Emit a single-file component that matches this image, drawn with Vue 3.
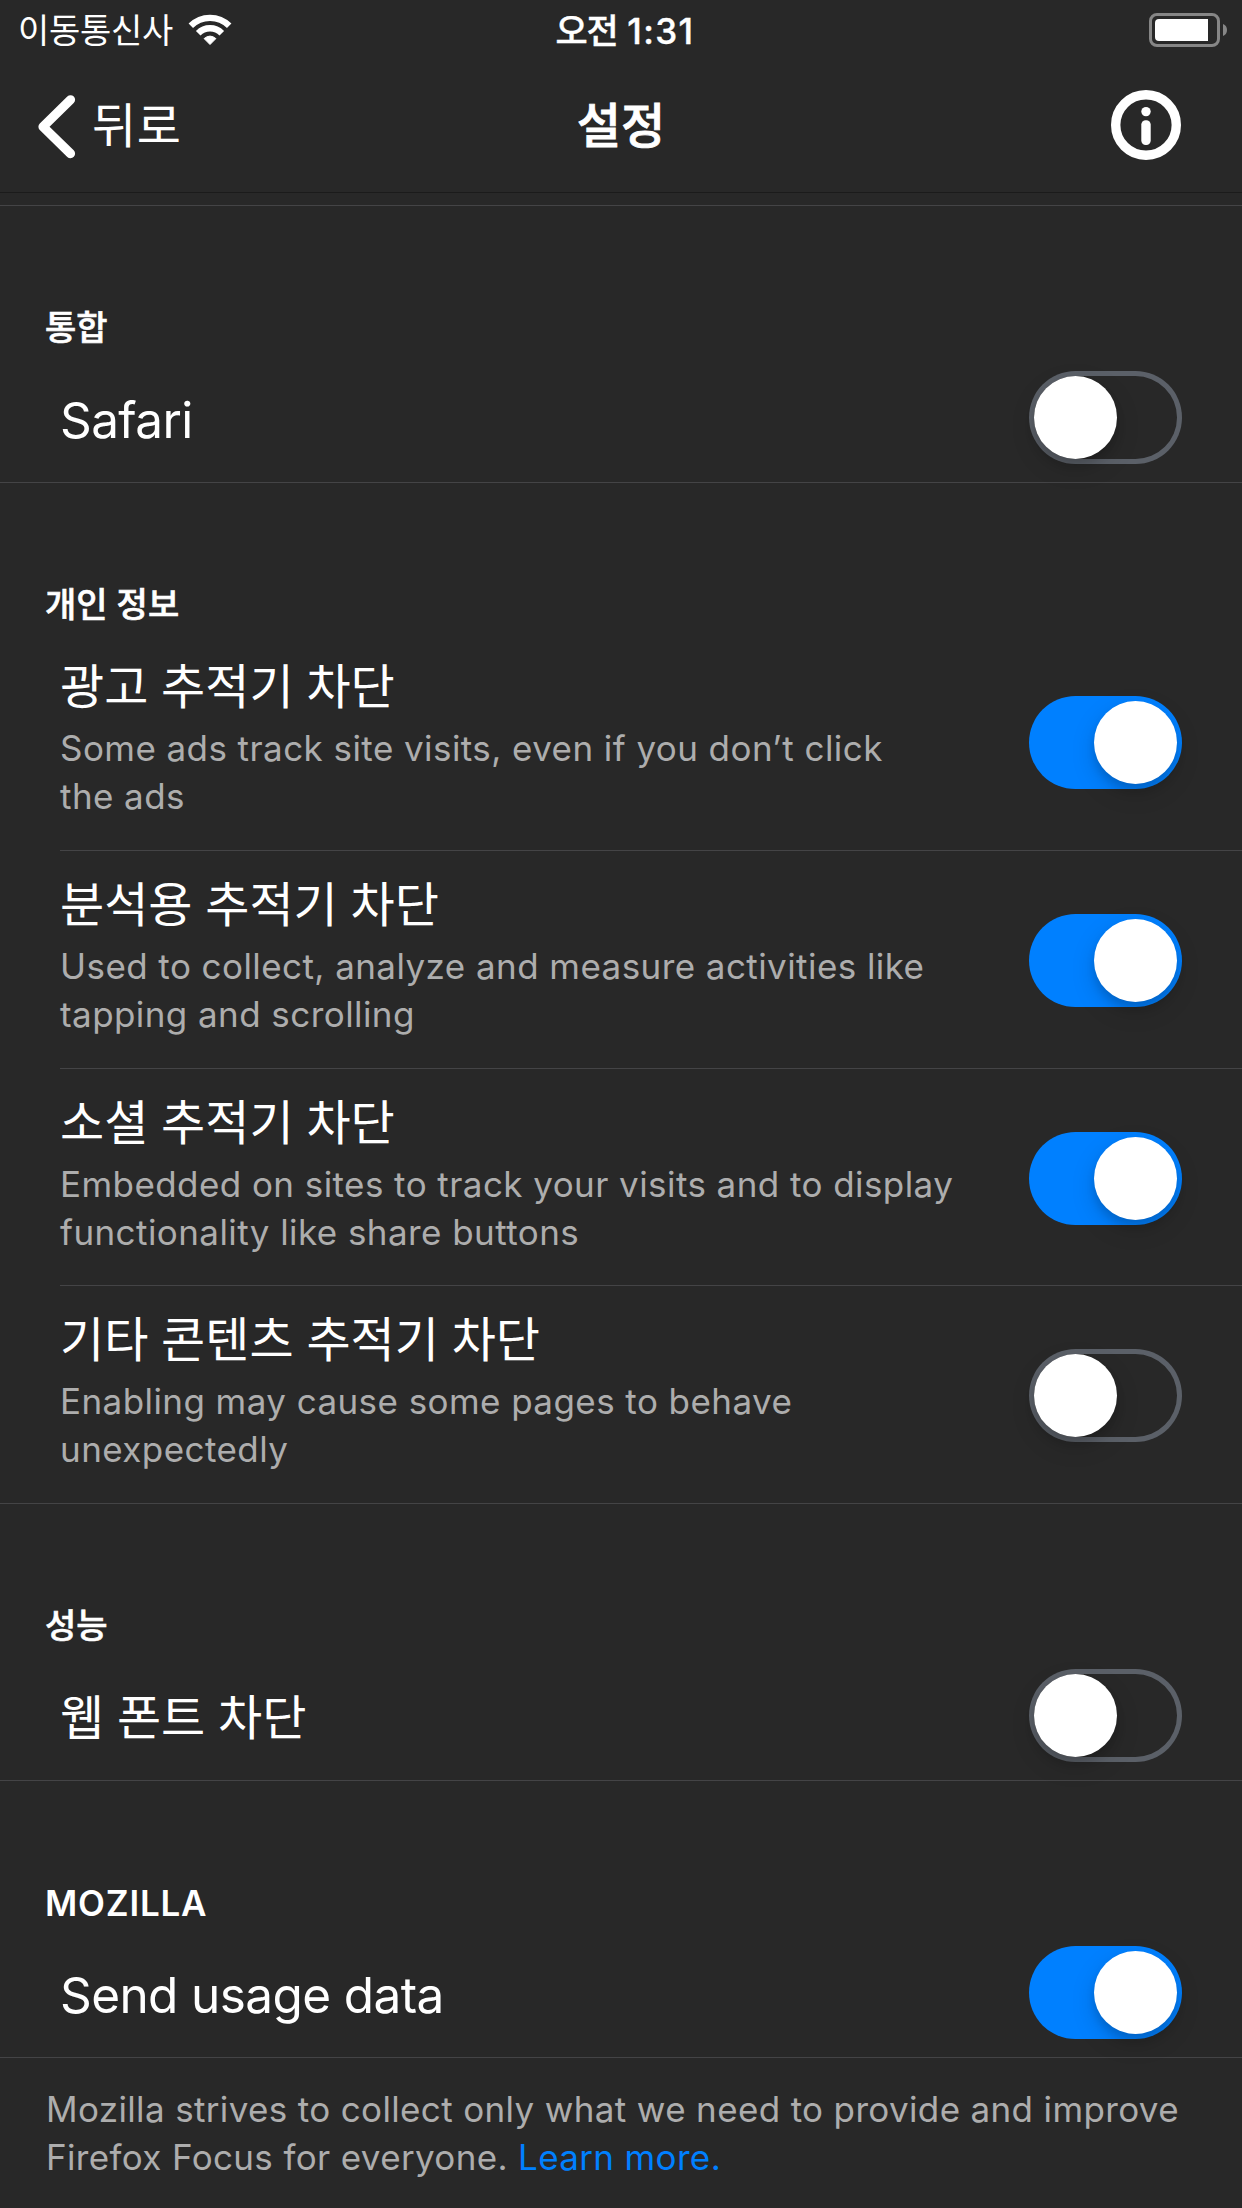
<script setup>
const sections = [
  { title: '통합', rows: [{ label: 'Safari', on: false, latin: true }] },
  {
    title: '개인 정보',
    rows: [
      { label: '광고 추적기 차단', desc: ['Some ads track site visits, even if you don’t click', 'the ads'], on: true },
      { label: '분석용 추적기 차단', desc: ['Used to collect, analyze and measure activities like', 'tapping and scrolling'], on: true },
      { label: '소셜 추적기 차단', desc: ['Embedded on sites to track your visits and to display', 'functionality like share buttons'], on: true },
      { label: '기타 콘텐츠 추적기 차단', desc: ['Enabling may cause some pages to behave', 'unexpectedly'], on: false }
    ]
  },
  { title: '성능', rows: [{ label: '웹 폰트 차단', on: false }] },
  { title: 'MOZILLA', latin: true, rows: [{ label: 'Send usage data', on: true, latin: true }] }
]
</script>

<template>
  <main class="screen">
    <header class="header">
      <div class="status">
        <div class="carrier">
          <span>이동통신사</span>
          <svg class="wifi" width="44" height="32" viewBox="-22 -31 44 32" fill="none" stroke="#fff">
            <path d="M-19.2-19.2A27.15 27.15 0 0 1 19.2-19.2" stroke-width="6.3" />
            <path d="M-11.8-11.8A16.7 16.7 0 0 1 11.8-11.8" stroke-width="6.5" />
            <path d="M0-.5L-5.9-6.4Q0-11.4 5.9-6.4Z" fill="#fff" stroke-width="1" stroke-linejoin="round" />
          </svg>
        </div>
        <div class="time"><span class="meridiem">오전</span> <span>1:31</span></div>
        <div class="power">
          <svg width="80" height="34" viewBox="0 0 80 34">
            <rect x="1.5" y="1.5" width="68" height="31" rx="6.5" fill="none" stroke="#868686" stroke-width="3" />
            <path d="M59 6H10a4 4 0 0 0-4 4v14a4 4 0 0 0 4 4h49z" fill="#fff" />
            <path d="M74 11q4 1.5 4 6t-4 6z" fill="#868686" />
          </svg>
        </div>
      </div>
      <nav class="nav">
        <div class="back">
          <svg width="40" height="64" viewBox="0 0 40 64" fill="none" stroke="#fff" stroke-width="9.2" stroke-linecap="round" stroke-linejoin="round">
            <path d="M32.5 4.8L5 31.7L32.5 58.6" />
          </svg>
          <span>뒤로</span>
        </div>
        <h1>설정</h1>
        <div class="info">
          <svg width="70" height="70" viewBox="0 0 70 70">
            <circle cx="35" cy="35" r="30.3" fill="none" stroke="#fff" stroke-width="9.4" />
            <circle cx="35" cy="21.6" r="4.7" fill="#fff" />
            <rect x="30.3" y="30.2" width="9.4" height="24.8" rx="4.4" fill="#fff" />
          </svg>
        </div>
      </nav>
    </header>
    <div class="scroll-edge"></div>

    <section v-for="s in sections" :key="s.title" class="group">
      <h2 :class="{ latin: s.latin }">{{ s.title }}</h2>
      <div class="rows" :class="{ tall: s.rows.length > 1 }">
        <div v-for="r in s.rows" :key="r.label" class="row">
          <div class="text">
            <p class="label" :class="{ latin: r.latin }">{{ r.label }}</p>
            <p v-for="(line, i) in r.desc" :key="line" class="desc" :class="{ first: i === 0 }">{{ line }}</p>
          </div>
          <div class="switch" :class="{ on: r.on }"><i></i></div>
        </div>
      </div>
    </section>

    <footer>
      <p>Mozilla strives to collect only what we need to provide and improve</p>
      <p>Firefox Focus for everyone. <a>Learn more.</a></p>
    </footer>
  </main>
</template>

<style>
body { margin: 0; background: #282828; }
</style>

<style scoped>
.screen {
  box-sizing: border-box;
  width: 1242px;
  height: 2208px;
  overflow: hidden;
  background: #282828;
  color: #fff;
  font-family: Inter, "Noto Sans CJK KR", sans-serif;
}
h1, h2, p { margin: 0; }
svg { display: block; }
.header { height: 192px; border-bottom: 1px solid #1b1b1b; }
.status {
  display: grid;
  grid-template-columns: 1fr auto 1fr;
  height: 60px;
  font-size: 34px;
  line-height: 62px;
  white-space: nowrap;
}
.carrier { display: flex; padding-left: 18px; letter-spacing: -0.3px; }
.wifi { margin: 14px 0 0 15px; }
.time { padding-left: 8px; font-weight: 500; font-size: 35px; letter-spacing: 1.4px; word-spacing: -1px; -webkit-text-stroke: 0.4px #fff; }
.meridiem { letter-spacing: -1.2px; }
.power { display: flex; justify-content: flex-end; padding: 13px 13px 0 0; }
.nav {
  display: grid;
  grid-template-columns: 1fr auto 1fr;
  height: 132px;
  font-size: 48px;
  line-height: 60px;
}
.back { display: flex; padding: 35px 0 0 38px; }
.back span { margin: 1px 0 0 14px; letter-spacing: 0.7px; }
h1 { padding-top: 36px; font-size: 48px; font-weight: 500; -webkit-text-stroke: 0.8px #fff; }
.info { display: flex; justify-content: flex-end; padding: 30px 61px 0 0; }
.scroll-edge { height: 12px; border-bottom: 1px solid #444446; }

h2 {
  box-sizing: border-box;
  height: 150px;
  padding: 98px 0 0 45px;
  font-size: 34px;
  line-height: 48px;
  font-weight: 500;
  -webkit-text-stroke: 0.6px #fff;
}
h2.latin { font-size: 35px; font-weight: 600; letter-spacing: 0.8px; -webkit-text-stroke: 0; }
.row {
  box-sizing: border-box;
  display: flex;
  justify-content: space-between;
  height: 127px;
  margin-left: 60px;
  padding: 15px 60px 0 0;
}
.rows { border-bottom: 1px solid #444446; height: 126px; }
.rows.tall { height: 870px; }
.tall .row { height: 218px; padding-top: 63px; border-bottom: 1px solid #444446; }
.tall .row:nth-child(3) { height: 217px; }
.tall .row:last-child { border-bottom: 0; }
.text { padding-top: 19px; }
.tall .text { margin-top: -39px; padding-top: 0; }
.label { font-size: 48px; line-height: 60px; white-space: nowrap; word-spacing: -0.7px; }
.label.latin { font-size: 49.5px; letter-spacing: -0.6px; word-spacing: 0; }
.desc { font-size: 35px; line-height: 48px; color: #adadad; white-space: nowrap; letter-spacing: 0.43px; }
.desc.first { margin-top: 7px; }
.switch {
  box-sizing: border-box;
  flex: none;
  width: 153px;
  height: 93px;
  padding: 5px;
  border-radius: 47px;
  box-shadow: inset 0 0 0 5px #5b6068;
}
.switch i {
  display: block;
  width: 83px;
  height: 83px;
  border-radius: 50%;
  background: #fff;
  box-shadow: 0 9px 24px rgba(0, 0, 0, 0.15), 0 6px 9px rgba(0, 0, 0, 0.12);
}
.switch.on { background: #0080ff; box-shadow: none; }
.switch.on i { margin-left: 60px; }
footer {
  padding: 27px 0 0 46px;
  color: #adadad;
  font-size: 35px;
  line-height: 48px;
  letter-spacing: 0.35px;
  white-space: nowrap;
}
a { color: #0080ff; }
</style>
